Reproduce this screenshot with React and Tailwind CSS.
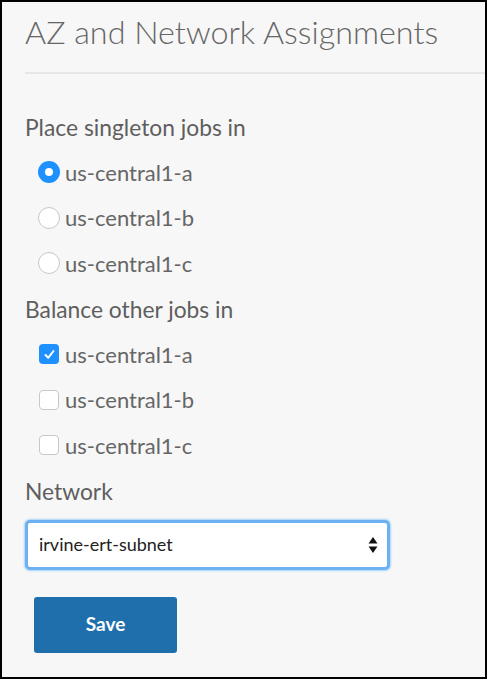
import { useState } from "react"

const Radio = ({ checked, label, onClick }) => (
  <div className="flex h-[45.5px] items-center cursor-pointer" onClick={onClick}>
    <span
      className={
        checked
          ? "ml-[13px] flex h-[22px] w-[22px] items-center justify-center rounded-full bg-[#1e90ff]"
          : "ml-[13px] flex h-[22px] w-[22px] items-center justify-center rounded-full border border-[#c8c8c8] bg-white"
      }
    >
      {checked && <span className="h-[8px] w-[8px] rounded-full bg-white" />}
    </span>
    <span className="ml-[5px] text-[22px] text-[#666]">{label}</span>
  </div>
)

const Checkbox = ({ checked, label, onClick }) => (
  <div className="flex h-[45.5px] items-center cursor-pointer" onClick={onClick}>
    <span
      className={
        checked
          ? "ml-[14px] flex h-[20px] w-[20px] items-center justify-center rounded-[4px] bg-[#1e90ff]"
          : "ml-[14px] flex h-[20px] w-[20px] items-center justify-center rounded-[4px] border border-[#c8c8c8] bg-white"
      }
    >
      {checked && (
        <svg width="13" height="13" viewBox="0 0 13 13">
          <path d="M2.5 7 L5.2 9.8 L10.5 3" fill="none" stroke="white" strokeWidth="2" strokeLinecap="round" strokeLinejoin="round" />
        </svg>
      )}
    </span>
    <span className="ml-[6px] text-[22px] text-[#666]">{label}</span>
  </div>
)

const zones = ["us-central1-a", "us-central1-b", "us-central1-c"]

const App = () => {
  const [singleton, setSingleton] = useState("us-central1-a")
  const [balance, setBalance] = useState(["us-central1-a"])

  const toggle = (z) =>
    setBalance((b) => (b.includes(z) ? b.filter((x) => x !== z) : [...b, z]))

  return (
    <div className="h-[679px] w-[487px] border-2 border-black bg-[#f7f7f7] font-['Lato',sans-serif]">
      <h1 className="pl-[23px] pt-[8px] text-[32.3px] font-light leading-[44px] text-[#666]">
        AZ and Network Assignments
      </h1>
      <div className="ml-[23px] mt-[18px] h-[2px] bg-[#e6e6e6]" />

      <div className="mt-[30px] pl-[23px]">
        <div className="flex h-[45.5px] items-center text-[22.8px] text-[#5e5e5e]">Place singleton jobs in</div>
        {zones.map((z) => (
          <Radio key={z} label={z} checked={singleton === z} onClick={() => setSingleton(z)} />
        ))}
        <div className="flex h-[45.5px] items-center text-[22.8px] text-[#5e5e5e]">Balance other jobs in</div>
        {zones.map((z) => (
          <Checkbox key={z} label={z} checked={balance.includes(z)} onClick={() => toggle(z)} />
        ))}
        <div className="flex h-[45.5px] items-center text-[22.8px] text-[#5e5e5e]">Network</div>

        <div className="mt-[6px] flex h-[50px] w-[365px] items-center justify-between rounded-[5px] border-[3px] border-[#6cb2f2] bg-white pl-[11px] pr-[9px] shadow-[0_0_2px_1px_#a9d3fa]">
          <span className="text-[18px] text-[#222]">irvine-ert-subnet</span>
          <svg width="10" height="18" viewBox="0 0 10 18">
            <path d="M5 1 L9.5 7.5 L0.5 7.5 Z" fill="#111" />
            <path d="M5 17 L9.5 10.5 L0.5 10.5 Z" fill="#111" />
          </svg>
        </div>

        <button className="ml-[9px] mt-[27px] h-[56px] w-[143px] rounded-[3px] bg-[#1f6fad] text-[19px] font-bold text-white">
          Save
        </button>
      </div>
    </div>
  )
}

export default App
